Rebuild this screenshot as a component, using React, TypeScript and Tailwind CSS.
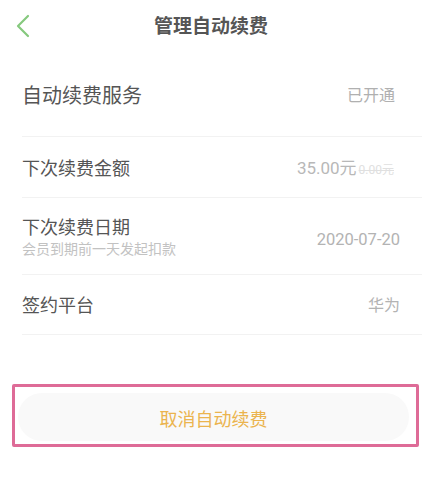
const font = { fontFamily: 'Roboto, "Noto Sans CJK SC", sans-serif' };

function Row({
  label,
  sub,
  right,
  className,
}: {
  label: string;
  sub?: string;
  right: React.ReactNode;
  className?: string;
}) {
  return (
    <div className={"flex items-center justify-between border-b border-[#f2f2f2] pr-[22px] " + (className ?? "")}>
      <div className="flex flex-col">
        <span className="text-[18px] leading-[24px] text-[#555]">{label}</span>
        {sub && <span className="text-[14px] leading-[18px] text-[#c2c2c2]">{sub}</span>}
      </div>
      {right}
    </div>
  );
}

export default function App() {
  return (
    <div className="w-[422px] h-[500px] bg-white overflow-hidden" style={font}>
      <header className="relative flex h-[55px] items-center justify-center">
        <svg
          className="absolute left-[15px] top-[14px]"
          width="16"
          height="24"
          viewBox="0 0 16 24"
          fill="none"
          stroke="#86c97e"
          strokeWidth="2.2"
          strokeLinecap="round"
          strokeLinejoin="round"
        >
          <path d="M13 2 L3 12 L13 22" />
        </svg>
        <h1 className="text-[19px] font-bold text-[#555]">管理自动续费</h1>
      </header>

      <div className="ml-[22px]">
        <div className="flex h-[82px] items-center justify-between border-b border-[#f2f2f2] pr-[27px]">
          <span className="text-[20px] text-[#555]">自动续费服务</span>
          <span className="text-[16px] text-[#b0b0b0]">已开通</span>
        </div>
        <Row
          className="h-[61px] pt-[4px]"
          label="下次续费金额"
          right={
            <span className="flex items-baseline pr-[6px]">
              <span className="text-[17px] text-[#b8b8b8]">35.00元</span>
              <span className="ml-[2px] text-[12px] text-[#e0e0e0] line-through">0.00元</span>
            </span>
          }
        />
        <Row
          className="h-[77px] pt-[2px]"
          label="下次续费日期"
          sub="会员到期前一天发起扣款"
          right={<span className="mt-[6px] text-[16.5px] text-[#b3b3b3]">2020-07-20</span>}
        />
        <Row
          className="h-[60px] pt-[2px]"
          label="签约平台"
          right={<span className="text-[16px] text-[#b3b3b3]">华为</span>}
        />
      </div>

      <div className="mt-[49px] ml-[12px] w-[407px] h-[63px] border-[3px] border-[#de6b97] rounded-[2px] pt-[6px] pb-[3px] pl-[3px] pr-[7px]">
        <button className="flex h-full w-full items-center justify-center rounded-full bg-[#f9f9f9] pt-[4px] text-[18px] text-[#ebb44e]">
          取消自动续费
        </button>
      </div>
    </div>
  );
}
